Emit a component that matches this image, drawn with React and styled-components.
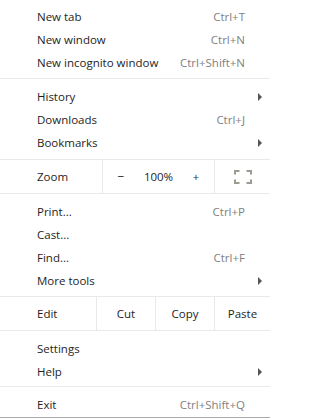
import React from "react";
import styled, { createGlobalStyle } from "styled-components";

const Global = createGlobalStyle`
  html, body { margin: 0; padding: 0; background: #fff; }
  body { font-family: "Open Sans", "Noto Sans", sans-serif; }
`;

const Menu = styled.div`
  width: 270px;
  height: 418px;
  box-sizing: border-box;
  background: #fff;
  border-bottom: 1px solid #a9a9a9;
  padding-top: 5px;
  display: flex;
  flex-direction: column;
  font-size: 11.5px;
  color: #1e1e1e;
`;

const Separator = styled.div`
  height: 1px;
  background: #e9e9e9;
  margin: ${(p) => p.$above ?? 4}px 0 ${(p) => p.$below ?? 6}px;
`;

const Item = styled.div`
  height: 23px;
  display: flex;
  align-items: center;
  padding: 0 8px 0 37px;
`;

const Label = styled.span`
  flex: 1;
  white-space: nowrap;
`;

const Shortcut = styled.span`
  color: #818181;
  white-space: nowrap;
`;

const Trail = styled.span`
  width: 17px;
  display: flex;
  justify-content: flex-end;
`;

const Arrow = styled.span`
  width: 0;
  height: 0;
  border-top: 4px solid transparent;
  border-bottom: 4px solid transparent;
  border-left: 4px solid #555;
`;

const SplitRow = styled.div`
  height: 33px;
  display: flex;
  align-items: stretch;
  border-top: 1px solid #e9e9e9;
  border-bottom: 1px solid #e9e9e9;
  margin-top: ${(p) => p.$above ?? 4}px;
  margin-bottom: 6px;
`;

const SplitLabel = styled.div`
  width: ${(p) => p.$w}px;
  box-sizing: border-box;
  padding-left: 37px;
  display: flex;
  align-items: center;
  border-right: 1px solid #e9e9e9;
`;

const Cell = styled.div`
  width: ${(p) => p.$w}px;
  flex: ${(p) => (p.$grow ? 1 : "none")};
  display: flex;
  align-items: center;
  justify-content: center;
  border-right: ${(p) => (p.$last ? "none" : "1px solid #e9e9e9")};
`;

const ZoomControls = styled.div`
  width: 111px;
  display: grid;
  grid-template-columns: 36px 1fr 36px;
  align-items: center;
  border-right: 1px solid #e9e9e9;
`;

const ZoomBtn = styled.span`
  text-align: center;
  font-size: ${(p) => p.$size}px;
`;

const ZoomValue = styled.span`
  text-align: center;
`;

const FullscreenIcon = () => (
  <svg width="18" height="14" viewBox="0 0 18 14">
    <path
      d="M1 4.5V1H5.5M12.5 1H17V4.5M17 9.5V13H12.5M5.5 13H1V9.5"
      fill="none"
      stroke="#9b9a93"
      strokeWidth="2"
    />
  </svg>
);

const Row = ({ label, shortcut, arrow }) => (
  <Item>
    <Label>{label}</Label>
    {shortcut && <Shortcut>{shortcut}</Shortcut>}
    <Trail>{arrow && <Arrow />}</Trail>
  </Item>
);

export default function App() {
  return (
    <>
      <Global />
      <Menu>
        <Row label="New tab" shortcut="Ctrl+T" />
        <Row label="New window" shortcut="Ctrl+N" />
        <Row label="New incognito window" shortcut="Ctrl+Shift+N" />
        <Separator />
        <Row label="History" arrow />
        <Row label="Downloads" shortcut="Ctrl+J" />
        <Row label="Bookmarks" arrow />
        <SplitRow $above={5}>
          <SplitLabel $w={103}>Zoom</SplitLabel>
          <ZoomControls>
            <ZoomBtn $size={12}>−</ZoomBtn>
            <ZoomValue>100%</ZoomValue>
            <ZoomBtn $size={11}>+</ZoomBtn>
          </ZoomControls>
          <Cell $grow $last>
            <FullscreenIcon />
          </Cell>
        </SplitRow>
        <Row label="Print..." shortcut="Ctrl+P" />
        <Row label="Cast..." />
        <Row label="Find..." shortcut="Ctrl+F" />
        <Row label="More tools" arrow />
        <SplitRow $above={4}>
          <SplitLabel $w={97}>Edit</SplitLabel>
          <Cell $w={58}>Cut</Cell>
          <Cell $w={58}>Copy</Cell>
          <Cell $grow $last>Paste</Cell>
        </SplitRow>
        <Row label="Settings" />
        <Row label="Help" arrow />
        <Separator $above={3} />
        <Row label="Exit" shortcut="Ctrl+Shift+Q" />
      </Menu>
    </>
  );
}
